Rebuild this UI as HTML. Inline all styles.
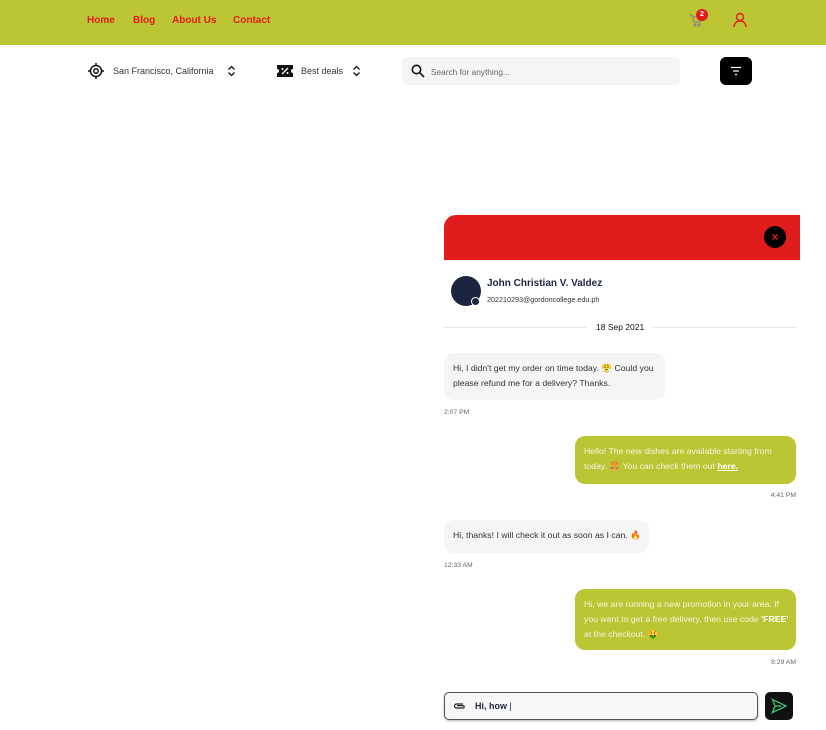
<!DOCTYPE html>
<html><head><meta charset="utf-8"><style>
*{margin:0;padding:0;box-sizing:border-box}
body{width:826px;height:730px;background:#fff;font-family:"Liberation Sans",sans-serif;position:relative;overflow:hidden;color:#222}
.a{position:absolute}
.nav{left:0;top:0;width:826px;height:45px;background:#bcc534}
.nl{color:#e11c1c;font-weight:bold;font-size:10px;top:15px}
.b{background:#f5f5f5;border-radius:10px;font-size:8.7px;line-height:15px;color:#333;padding:8px 9px;white-space:nowrap}
.g{background:#bcc534;color:#f4f6e0;border-radius:10px;font-size:8.7px;line-height:15px;padding:8px 9px;white-space:nowrap}
.t{font-size:6.8px;color:#666}
</style></head><body>
<div class="a nav"></div>
<div class="a nl" style="left:87px">Home</div>
<div class="a nl" style="left:133px">Blog</div>
<div class="a nl" style="left:172px">About Us</div>
<div class="a nl" style="left:233px">Contact</div>
<svg class="a" style="left:689px;top:13px" width="14" height="14" viewBox="0 0 14 14" fill="none" stroke="#888" stroke-width="1.2"><path d="M1 2h2l2 7h6l1.5-5H4"/><circle cx="6" cy="12" r="1"/><circle cx="10" cy="12" r="1"/></svg>
<div class="a" style="left:696px;top:9px;width:12px;height:12px;border-radius:6px;background:#e11c1c;color:#fff;font-size:7px;font-weight:bold;text-align:center;line-height:12px">2</div>
<svg class="a" style="left:733px;top:12px" width="14" height="16" viewBox="0 0 14 16" fill="none" stroke="#e11c1c" stroke-width="1.4"><circle cx="7" cy="5" r="3.5"/><path d="M1 15c0-4 3-6 6-6s6 2 6 6"/></svg>

<svg class="a" style="left:88px;top:63px" width="16" height="16" viewBox="0 0 16 16" fill="none" stroke="#111" stroke-width="1.5"><circle cx="8" cy="8" r="5.5"/><circle cx="8" cy="8" r="2.2"/><path d="M8 0v2.5M8 13.5V16M0 8h2.5M13.5 8H16"/></svg>
<div class="a" style="left:113px;top:66px;font-size:9px;color:#333">San Francisco, California</div>
<svg class="a" style="left:227px;top:65px" width="9" height="12" viewBox="0 0 9 12" fill="none" stroke="#111" stroke-width="1.3"><path d="M1.5 4.5L4.5 1.5 7.5 4.5M1.5 7.5l3 3 3-3"/></svg>
<svg class="a" style="left:277px;top:65px" width="16" height="12" viewBox="0 0 16 12"><path d="M0 0h16v4a2 2 0 000 4v4H0V8a2 2 0 000-4z" fill="#111"/><path d="M5 9l6-6" stroke="#fff" stroke-width="1.3"/><circle cx="5.5" cy="4" r="1" fill="#fff"/><circle cx="10.5" cy="8" r="1" fill="#fff"/></svg>
<div class="a" style="left:301px;top:66px;font-size:9px;color:#333">Best deals</div>
<svg class="a" style="left:352px;top:65px" width="9" height="12" viewBox="0 0 9 12" fill="none" stroke="#111" stroke-width="1.3"><path d="M1.5 4.5L4.5 1.5 7.5 4.5M1.5 7.5l3 3 3-3"/></svg>
<div class="a" style="left:402px;top:57px;width:278px;height:28px;background:#f5f5f5;border-radius:6px"></div>
<svg class="a" style="left:411px;top:64px" width="14" height="14" viewBox="0 0 14 14" fill="none" stroke="#111" stroke-width="1.6"><circle cx="5.5" cy="5.5" r="4.2"/><path d="M8.7 8.7L13 13"/></svg>
<div class="a" style="left:431px;top:67px;font-size:8.3px;color:#666">Search for anything...</div>
<div class="a" style="left:720px;top:57px;width:32px;height:28px;background:#000;border-radius:6px"></div>
<svg class="a" style="left:730px;top:66px" width="12" height="10" viewBox="0 0 12 10" stroke="#fff" stroke-width="1.3"><path d="M1 1.5h10M3 5h6M5 8.5h2"/></svg>

<div class="a" style="left:444px;top:215px;width:356px;height:45px;background:#e11c1c;border-radius:12px 0 0 0"></div>
<div class="a" style="left:764px;top:226px;width:22px;height:22px;border-radius:11px;background:#000;color:#e11c1c;font-size:12px;font-weight:bold;text-align:center;line-height:22px">×</div>
<div class="a" style="left:451px;top:276px;width:30px;height:30px;border-radius:15px;background:#1c2540"></div>
<div class="a" style="left:471px;top:297px;width:9px;height:9px;border-radius:5px;background:#1c2540;border:1.5px solid #fff"></div>
<div class="a" style="left:487px;top:278px;font-size:10px;font-weight:bold;color:#1c2540">John Christian V. Valdez</div>
<div class="a" style="left:487px;top:295px;font-size:7.2px;color:#333">202210293@gordoncollege.edu.ph</div>
<div class="a" style="left:444px;top:327px;width:142px;height:1px;background:#e5e5e5"></div>
<div class="a" style="left:653px;top:327px;width:143px;height:1px;background:#e5e5e5"></div>
<div class="a" style="left:596px;top:322px;font-size:8.5px;color:#111">18 Sep 2021</div>

<div class="a b" style="left:444px;top:353px;width:221px;height:47px">Hi, I didn't get my order on time today. 😤 Could you<br>please refund me for a delivery? Thanks.</div>
<div class="a t" style="left:444px;top:409px">2:07 PM</div>
<div class="a g" style="left:575px;top:436px;width:221px;height:48px">Hello! The new dishes are available starting from<br>today. 🍔 You can check them out <b style="text-decoration:underline;color:#fff">here.</b></div>
<div class="a t" style="right:30px;top:492px">4:41 PM</div>
<div class="a b" style="left:444px;top:520px;width:205px;height:33px">Hi, thanks! I will check it out as soon as I can. 🔥</div>
<div class="a t" style="left:444px;top:562px">12:33 AM</div>
<div class="a g" style="left:575px;top:589px;width:221px;height:61px">Hi, we are running a new promotion in your area. If<br>you want to get a free delivery, then use code <b style="color:#fff">'FREE'</b><br>at the checkout. 🤑</div>
<div class="a t" style="right:30px;top:659px">8:29 AM</div>

<div class="a" style="left:444px;top:692px;width:314px;height:28px;border:1px solid #555;border-radius:5px;background:#f7f7f7;box-shadow:0 1px 2px rgba(0,0,0,.3)"></div>
<svg class="a" style="left:453px;top:702px" width="13" height="8" viewBox="0 0 13 8" fill="none" stroke="#222" stroke-width="1.2"><path d="M10 2H3.5a2 2 0 000 4H10a1.2 1.2 0 000-2.4H4"/></svg>
<div class="a" style="left:475px;top:701px;font-size:9px;font-weight:bold;color:#1c2540">Hi, how <span style="font-weight:normal">|</span></div>
<div class="a" style="left:765px;top:692px;width:28px;height:28px;background:#111;border-radius:5px"></div>
<svg class="a" style="left:771px;top:698px" width="16" height="16" viewBox="0 0 16 16" fill="none" stroke="#3bb56a" stroke-width="1.5"><path d="M1.5 1.5L15 8 1.5 14.5 4 8zM4 8h6"/></svg>
</body></html>
